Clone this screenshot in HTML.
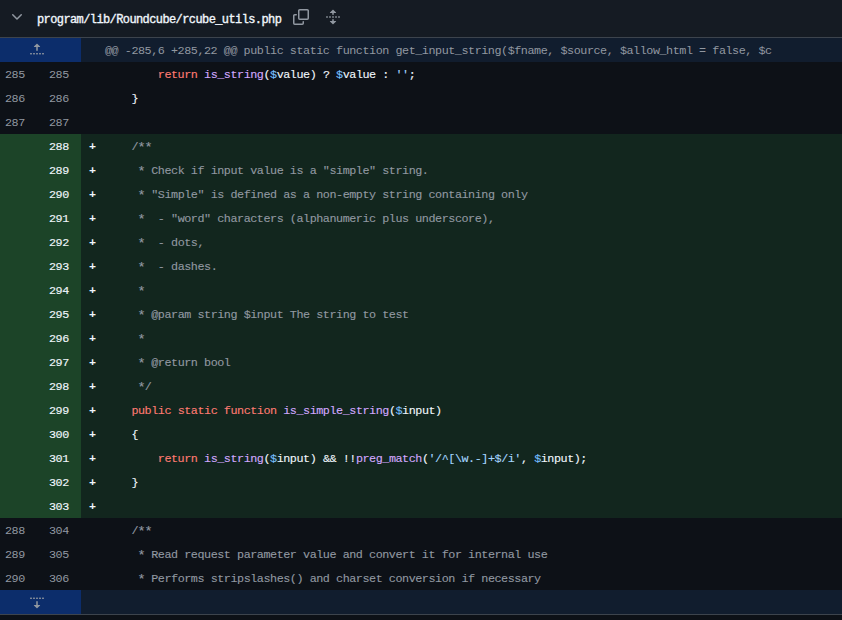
<!DOCTYPE html>
<html><head><meta charset="utf-8">
<style>
*{margin:0;padding:0;box-sizing:border-box}
html,body{width:842px;height:620px;overflow:hidden;background:#0d1117}
body{position:relative;font-family:"Liberation Mono",monospace;font-size:11.75px;letter-spacing:-0.45px;color:#f0f6fc}
.hdr{position:absolute;left:0;top:0;width:842px;height:37px;background:#151b23;border-bottom:1px solid #3d444d;height:38px}
.fname{position:absolute;left:37px;top:0.8px;line-height:38px;font-size:12px;letter-spacing:-0.6px;font-weight:normal;-webkit-text-stroke:0.35px #f0f6fc;color:#f0f6fc;white-space:pre}
.hunk{position:absolute;left:0;top:38px;width:842px;height:24px;background:#111d2e}
.hunk .hn{position:absolute;left:0;top:0;width:81px;height:24px;background:#0c2d6b}
.hunk .ht{position:absolute;left:105px;top:0.8px;line-height:24px;color:#9198a1;white-space:pre}
.row{position:absolute;left:0;width:842px;height:24px;line-height:24px;white-space:pre}
.row.add{background:#12261e}
.numbg{position:absolute;left:0;top:0;width:81px;height:24px;background:#1c4428}
.nl{position:absolute;left:5px;top:0.8px;color:#9198a1}
.nr{position:absolute;left:49px;top:0.8px;color:#9198a1}
.add .nr{color:#f0f6fc;-webkit-text-stroke:0.15px #f0f6fc}
.mk{position:absolute;left:89px;top:0.8px;color:#f0f6fc;font-weight:bold}
.code{position:absolute;left:105px;top:0.8px;color:#f0f6fc;-webkit-text-stroke:0.12px currentColor}
.ast{display:inline-block;transform:translateY(0.6px) scale(1.15)}
.k{color:#ff7b72}.e{color:#d2a8ff}.c{color:#9198a1}.s{color:#a5d6ff}.v{color:#79c0ff}
.exp{position:absolute;left:0;top:590px;width:842px;height:24px;background:#111d2e}
.exp .hn{position:absolute;left:0;top:0;width:81px;height:24px;background:#0c2d6b}
.bot{position:absolute;left:0;top:614px;width:842px;height:1px;background:#3d444d}
</style></head><body>
<div class="hdr">
  <svg style="position:absolute;left:9px;top:9px" width="16" height="16" viewBox="0 0 16 16"><path d="M12.78 5.22a.749.749 0 0 1 0 1.06l-4.25 4.25a.749.749 0 0 1-1.06 0L3.22 6.28a.749.749 0 1 1 1.06-1.06L8 8.939l3.72-3.719a.749.749 0 0 1 1.06 0Z" fill="#9198a1"/></svg>
  <div class="fname">program/lib/Roundcube/rcube_utils.php</div>
  <svg style="position:absolute;left:293px;top:9px" width="16" height="16" viewBox="0 0 16 16"><path fill="#9198a1" d="M0 6.75C0 5.784.784 5 1.75 5h1.5a.75.75 0 0 1 0 1.5h-1.5a.25.25 0 0 0-.25.25v7.5c0 .138.112.25.25.25h7.5a.25.25 0 0 0 .25-.25v-1.5a.75.75 0 0 1 1.5 0v1.5A1.75 1.75 0 0 1 9.25 16h-7.5A1.75 1.75 0 0 1 0 14.25Z"/><path fill="#9198a1" d="M5 1.75C5 .784 5.784 0 6.75 0h7.5C15.216 0 16 .784 16 1.75v7.5A1.75 1.75 0 0 1 14.25 11h-7.5A1.75 1.75 0 0 1 5 9.25Zm1.75-.25a.25.25 0 0 0-.25.25v7.5c0 .138.112.25.25.25h7.5a.25.25 0 0 0 .25-.25v-7.5a.25.25 0 0 0-.25-.25Z"/></svg>
  <svg style="position:absolute;left:325px;top:9px" width="16" height="16" viewBox="0 0 16 16"><path fill="#9198a1" d="M8.177.677l2.896 2.896a.25.25 0 0 1-.177.427H8.75v1.25a.75.75 0 0 1-1.5 0V4H5.104a.25.25 0 0 1-.177-.427L7.823.677a.25.25 0 0 1 .354 0ZM7.25 10.75a.75.75 0 0 1 1.5 0V12h2.146a.25.25 0 0 1 .177.427l-2.896 2.896a.25.25 0 0 1-.354 0l-2.896-2.896A.25.25 0 0 1 5.104 12H7.25v-1.25Zm-5-2a.75.75 0 0 0 0-1.5h-.5a.75.75 0 0 0 0 1.5h.5ZM6 8a.75.75 0 0 1-.75.75h-.5a.75.75 0 0 1 0-1.5h.5A.75.75 0 0 1 6 8Zm2.25.75a.75.75 0 0 0 0-1.5h-.5a.75.75 0 0 0 0 1.5h.5ZM12 8a.75.75 0 0 1-.75.75h-.5a.75.75 0 0 1 0-1.5h.5A.75.75 0 0 1 12 8Zm2.25.75a.75.75 0 0 0 0-1.5h-.5a.75.75 0 0 0 0 1.5h.5Z"/></svg>
</div>
<div class="hunk"><div class="hn">
  <svg style="position:absolute;left:29px;top:4px" width="16" height="16" viewBox="0 0 16 16"><path fill="#9198a1" d="M7.823 1.677 4.927 4.573A.25.25 0 0 0 5.104 5H7.25v3.236a.75.75 0 1 0 1.5 0V5h2.146a.25.25 0 0 0 .177-.427L8.177 1.677a.25.25 0 0 0-.354 0ZM13.75 11a.75.75 0 0 0 0 1.5h.5a.75.75 0 0 0 0-1.5h-.5Zm-3.75.75a.75.75 0 0 1 .75-.75h.5a.75.75 0 0 1 0 1.5h-.5a.75.75 0 0 1-.75-.75ZM7.75 11a.75.75 0 0 0 0 1.5h.5a.75.75 0 0 0 0-1.5h-.5ZM4 11.75a.75.75 0 0 1 .75-.75h.5a.75.75 0 0 1 0 1.5h-.5a.75.75 0 0 1-.75-.75ZM1.75 11a.75.75 0 0 0 0 1.5h.5a.75.75 0 0 0 0-1.5h-.5Z"/></svg>
</div><div class="ht">@@ -285,6 +285,22 @@ public static function get_input_string($fname, $source, $allow_html = false, $c</div></div>
<div class="row" style="top:62px"><span class="nl">285</span><span class="nr">285</span><span class="code">        <span class="k">return</span> <span class="e">is_string</span>(<span class="v">$</span>value) ? <span class="v">$</span>value : <span class="s">''</span>;</span></div>
<div class="row" style="top:86px"><span class="nl">286</span><span class="nr">286</span><span class="code">    }</span></div>
<div class="row" style="top:110px"><span class="nl">287</span><span class="nr">287</span><span class="code"></span></div>
<div class="row add" style="top:134px"><span class="numbg"></span><span class="nr">288</span><span class="mk">+</span><span class="code"><span class="c">    /<span class="ast">*</span><span class="ast">*</span></span></span></div>
<div class="row add" style="top:158px"><span class="numbg"></span><span class="nr">289</span><span class="mk">+</span><span class="code"><span class="c">     <span class="ast">*</span> Check if input value is a "simple" string.</span></span></div>
<div class="row add" style="top:182px"><span class="numbg"></span><span class="nr">290</span><span class="mk">+</span><span class="code"><span class="c">     <span class="ast">*</span> "Simple" is defined as a non-empty string containing only</span></span></div>
<div class="row add" style="top:206px"><span class="numbg"></span><span class="nr">291</span><span class="mk">+</span><span class="code"><span class="c">     <span class="ast">*</span>  - "word" characters (alphanumeric plus underscore),</span></span></div>
<div class="row add" style="top:230px"><span class="numbg"></span><span class="nr">292</span><span class="mk">+</span><span class="code"><span class="c">     <span class="ast">*</span>  - dots,</span></span></div>
<div class="row add" style="top:254px"><span class="numbg"></span><span class="nr">293</span><span class="mk">+</span><span class="code"><span class="c">     <span class="ast">*</span>  - dashes.</span></span></div>
<div class="row add" style="top:278px"><span class="numbg"></span><span class="nr">294</span><span class="mk">+</span><span class="code"><span class="c">     <span class="ast">*</span></span></span></div>
<div class="row add" style="top:302px"><span class="numbg"></span><span class="nr">295</span><span class="mk">+</span><span class="code"><span class="c">     <span class="ast">*</span> @param string $input The string to test</span></span></div>
<div class="row add" style="top:326px"><span class="numbg"></span><span class="nr">296</span><span class="mk">+</span><span class="code"><span class="c">     <span class="ast">*</span></span></span></div>
<div class="row add" style="top:350px"><span class="numbg"></span><span class="nr">297</span><span class="mk">+</span><span class="code"><span class="c">     <span class="ast">*</span> @return bool</span></span></div>
<div class="row add" style="top:374px"><span class="numbg"></span><span class="nr">298</span><span class="mk">+</span><span class="code"><span class="c">     <span class="ast">*</span>/</span></span></div>
<div class="row add" style="top:398px"><span class="numbg"></span><span class="nr">299</span><span class="mk">+</span><span class="code">    <span class="k">public</span> <span class="k">static</span> <span class="k">function</span> <span class="e">is_simple_string</span>(<span class="v">$</span>input)</span></div>
<div class="row add" style="top:422px"><span class="numbg"></span><span class="nr">300</span><span class="mk">+</span><span class="code">    {</span></div>
<div class="row add" style="top:446px"><span class="numbg"></span><span class="nr">301</span><span class="mk">+</span><span class="code">        <span class="k">return</span> <span class="e">is_string</span>(<span class="v">$</span>input) &amp;&amp; !!<span class="e">preg_match</span>(<span class="s">'/^[\w.-]+$/i'</span>, <span class="v">$</span>input);</span></div>
<div class="row add" style="top:470px"><span class="numbg"></span><span class="nr">302</span><span class="mk">+</span><span class="code">    }</span></div>
<div class="row add" style="top:494px"><span class="numbg"></span><span class="nr">303</span><span class="mk">+</span><span class="code"></span></div>
<div class="row" style="top:518px"><span class="nl">288</span><span class="nr">304</span><span class="code"><span class="c">    /<span class="ast">*</span><span class="ast">*</span></span></span></div>
<div class="row" style="top:542px"><span class="nl">289</span><span class="nr">305</span><span class="code"><span class="c">     <span class="ast">*</span> Read request parameter value and convert it for internal use</span></span></div>
<div class="row" style="top:566px"><span class="nl">290</span><span class="nr">306</span><span class="code"><span class="c">     <span class="ast">*</span> Performs stripslashes() and charset conversion if necessary</span></span></div>
<div class="exp"><div class="hn">
  <svg style="position:absolute;left:29px;top:4px" width="16" height="16" viewBox="0 0 16 16"><path fill="#9198a1" d="m8.177 14.323 2.896-2.896a.25.25 0 0 0-.177-.427H8.75V7.764a.75.75 0 1 0-1.5 0V11H5.104a.25.25 0 0 0-.177.427l2.896 2.896a.25.25 0 0 0 .354 0ZM2.25 5a.75.75 0 0 0 0-1.5h-.5a.75.75 0 0 0 0 1.5h.5ZM6 4.25a.75.75 0 0 1-.75.75h-.5a.75.75 0 0 1 0-1.5h.5a.75.75 0 0 1 .75.75ZM8.25 5a.75.75 0 0 0 0-1.5h-.5a.75.75 0 0 0 0 1.5h.5ZM12 4.25a.75.75 0 0 1-.75.75h-.5a.75.75 0 0 1 0-1.5h.5a.75.75 0 0 1 .75.75Zm2.25.75a.75.75 0 0 0 0-1.5h-.5a.75.75 0 0 0 0 1.5h.5Z"/></svg>
</div></div>
<div class="bot"></div>
</body></html>
